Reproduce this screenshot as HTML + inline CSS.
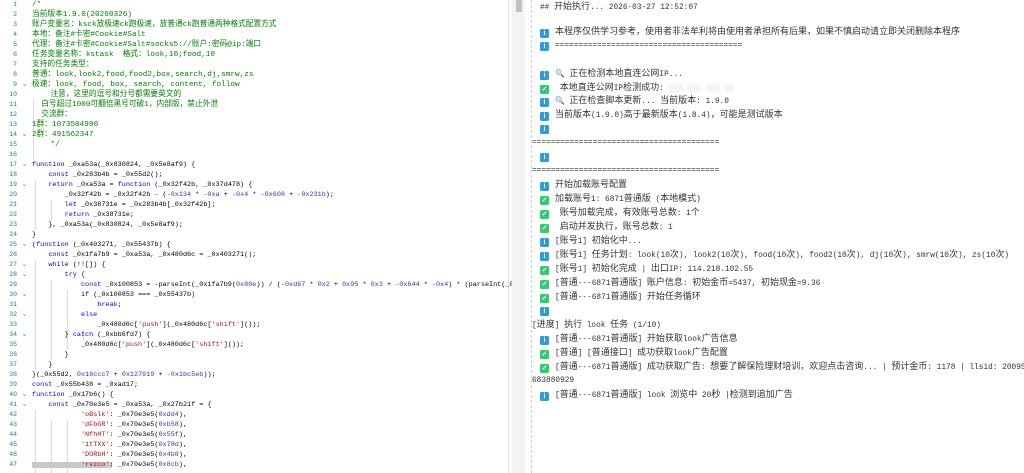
<!DOCTYPE html>
<html><head><meta charset="utf-8"><style>
body{margin:0;width:1024px;height:473px;overflow:hidden;background:#fff;font-family:"Liberation Mono","Noto Sans CJK SC",monospace;}
#left{position:absolute;left:0;top:0;width:512px;height:473px;overflow:hidden;font-size:6.8px;}
.ln{position:absolute;left:0;height:10px;line-height:10px;white-space:pre;width:600px}
.n{display:inline-block;width:17px;text-align:right;color:#237893;font-size:6.5px}
.f{display:inline-block;width:15px;color:#888;text-align:center}
.c{color:#008000;font-size:7.7px}.k{color:#0000ff}.h{color:#3535b8}.s{color:#a31515}
.g{position:absolute;width:1px;background:#d8d8d8}
#right{position:absolute;left:531px;top:0;width:493px;height:473px;font-size:7.8px;color:#333;border-left:1px dashed #ccc;}
.r{position:absolute;left:8px;height:14px;line-height:14px;white-space:pre}
.z{font-size:9px}
.i,.v{display:inline-block;width:9px;height:9px;border-radius:1.5px;vertical-align:-1px;margin-right:6px;color:#fff;font:bold 7px "Liberation Sans";text-align:center;line-height:9px}
.i{background:#2d9cdb}.v{background:#2ecc71}
</style></head><body>
<div id="left">
<div class="g" style="left:33px;top:100px;height:60px"></div>
<div class="g" style="left:35px;top:180px;height:50px"></div>
<div class="g" style="left:51px;top:200px;height:20px"></div>
<div class="g" style="left:35px;top:260px;height:110px"></div>
<div class="g" style="left:51px;top:280px;height:80px"></div>
<div class="g" style="left:67px;top:290px;height:60px"></div>
<div class="g" style="left:83px;top:330px;height:10px"></div>
<div class="g" style="left:35px;top:410px;height:63px"></div>
<div class="g" style="left:51px;top:420px;height:53px"></div>
<div class="g" style="left:67px;top:420px;height:53px"></div>
<div style="position:absolute;left:32px;top:462px;width:80px;height:6px;background:#c8c8c8"></div>
<div style="position:absolute;left:508px;top:0;width:1px;height:473px;background:#e4e4e4"></div>
<div style="position:absolute;left:0;top:0">
<div class="ln" style="top:0"><span class="n">1</span><span class="f"></span><span class="c">/*</span></div>
<div class="ln" style="top:10px"><span class="n">2</span><span class="f"></span><span class="c">当前版本1.9.0(20260326)</span></div>
<div class="ln" style="top:20px"><span class="n">3</span><span class="f"></span><span class="c">账户变量名：ksck放极速ck跑极速，放普通ck跑普通两种格式配置方式</span></div>
<div class="ln" style="top:30px"><span class="n">4</span><span class="f"></span><span class="c">本地：备注#卡密#Cookie#Salt</span></div>
<div class="ln" style="top:40px"><span class="n">5</span><span class="f"></span><span class="c">代理：备注#卡密#Cookie#Salt#socks5://账户:密码@ip:端口</span></div>
<div class="ln" style="top:50px"><span class="n">6</span><span class="f"></span><span class="c">任务变量名称：kstask  格式：look,10;food,10</span></div>
<div class="ln" style="top:60px"><span class="n">7</span><span class="f"></span><span class="c">支持的任务类型：</span></div>
<div class="ln" style="top:70px"><span class="n">8</span><span class="f"></span><span class="c">普通：look,look2,food,food2,box,search,dj,smrw,zs</span></div>
<div class="ln" style="top:80px"><span class="n">9</span><span class="f">⌄</span><span class="c">极速：look, food, box, search, content, follow</span></div>
<div class="ln" style="top:90px"><span class="n">10</span><span class="f"></span><span class="c">    注意，这里的逗号和分号都需要英文的</span></div>
<div class="ln" style="top:100px"><span class="n">11</span><span class="f"></span><span class="c">  白号超过1000可翻倍黑号可破1，内部版，禁止外泄</span></div>
<div class="ln" style="top:110px"><span class="n">12</span><span class="f"></span><span class="c">  交流群：</span></div>
<div class="ln" style="top:120px"><span class="n">13</span><span class="f"></span><span class="c">1群：1073504990</span></div>
<div class="ln" style="top:130px"><span class="n">14</span><span class="f">⌄</span><span class="c">2群：491562347</span></div>
<div class="ln" style="top:140px"><span class="n">15</span><span class="f"></span><span class="c">    */</span></div>
<div class="ln" style="top:150px"><span class="n">16</span><span class="f"></span></div>
<div class="ln" style="top:160px"><span class="n">17</span><span class="f">⌄</span><span class="k">function</span> _0xa53a(_0x830824, _0x5e8af9) {</div>
<div class="ln" style="top:170px"><span class="n">18</span><span class="f"></span>    <span class="k">const</span> _0x283b4b = _0x55d2();</div>
<div class="ln" style="top:180px"><span class="n">19</span><span class="f">⌄</span>    <span class="k">return</span> _0xa53a = <span class="k">function</span> (_0x32f42b, _0x37d478) {</div>
<div class="ln" style="top:190px"><span class="n">20</span><span class="f"></span>        _0x32f42b = _0x32f42b - (<span class="h">-0x134</span> * <span class="h">-0xa</span> + <span class="h">-0x4</span> * <span class="h">-0x608</span> + <span class="h">-0x231b</span>);</div>
<div class="ln" style="top:200px"><span class="n">21</span><span class="f"></span>        <span class="k">let</span> _0x38731e = _0x283b4b[_0x32f42b];</div>
<div class="ln" style="top:210px"><span class="n">22</span><span class="f"></span>        <span class="k">return</span> _0x38731e;</div>
<div class="ln" style="top:220px"><span class="n">23</span><span class="f"></span>    }, _0xa53a(_0x830824, _0x5e8af9);</div>
<div class="ln" style="top:230px"><span class="n">24</span><span class="f"></span>}</div>
<div class="ln" style="top:240px"><span class="n">25</span><span class="f">⌄</span>(<span class="k">function</span> (_0x403271, _0x55437b) {</div>
<div class="ln" style="top:250px"><span class="n">26</span><span class="f"></span>    <span class="k">const</span> _0x1fa7b9 = _0xa53a, _0x480d6c = _0x403271();</div>
<div class="ln" style="top:260px"><span class="n">27</span><span class="f">⌄</span>    <span class="k">while</span> (!![]) {</div>
<div class="ln" style="top:270px"><span class="n">28</span><span class="f">⌄</span>        <span class="k">try</span> {</div>
<div class="ln" style="top:280px"><span class="n">29</span><span class="f"></span>            <span class="k">const</span> _0x100853 = -parseInt(_0x1fa7b9(<span class="h">0x80e</span>)) / (<span class="h">-0xd67</span> * <span class="h">0x2</span> + <span class="h">0x95</span> * <span class="h">0x3</span> + <span class="h">-0x644</span> * <span class="h">-0x4</span>) * (parseInt(_0x</div>
<div class="ln" style="top:290px"><span class="n">30</span><span class="f">⌄</span>            <span class="k">if</span> (_0x100853 === _0x55437b)</div>
<div class="ln" style="top:300px"><span class="n">31</span><span class="f"></span>                <span class="k">break</span>;</div>
<div class="ln" style="top:310px"><span class="n">32</span><span class="f">⌄</span>            <span class="k">else</span></div>
<div class="ln" style="top:320px"><span class="n">33</span><span class="f"></span>                _0x480d6c[<span class="s">'push'</span>](_0x480d6c[<span class="s">'shift'</span>]());</div>
<div class="ln" style="top:330px"><span class="n">34</span><span class="f">⌄</span>        } <span class="k">catch</span> (_0xbb6fd7) {</div>
<div class="ln" style="top:340px"><span class="n">35</span><span class="f"></span>            _0x480d6c[<span class="s">'push'</span>](_0x480d6c[<span class="s">'shift'</span>]());</div>
<div class="ln" style="top:350px"><span class="n">36</span><span class="f"></span>        }</div>
<div class="ln" style="top:360px"><span class="n">37</span><span class="f"></span>    }</div>
<div class="ln" style="top:370px"><span class="n">38</span><span class="f"></span>}(_0x55d2, <span class="h">0x16ccc7</span> + <span class="h">0x127919</span> + <span class="h">-0x1bc5eb</span>));</div>
<div class="ln" style="top:380px"><span class="n">39</span><span class="f"></span><span class="k">const</span> _0x55b438 = _0xad17;</div>
<div class="ln" style="top:390px"><span class="n">40</span><span class="f">⌄</span><span class="k">function</span> _0x17b6() {</div>
<div class="ln" style="top:400px"><span class="n">41</span><span class="f">⌄</span>    <span class="k">const</span> _0x70e3e5 = _0xa53a, _0x27b21f = {</div>
<div class="ln" style="top:410px"><span class="n">42</span><span class="f"></span>            <span class="s">'oBslk'</span>: _0x70e3e5(<span class="h">0xdd4</span>),</div>
<div class="ln" style="top:420px"><span class="n">43</span><span class="f"></span>            <span class="s">'dFbGR'</span>: _0x70e3e5(<span class="h">0xb58</span>),</div>
<div class="ln" style="top:430px"><span class="n">44</span><span class="f"></span>            <span class="s">'NfhHT'</span>: _0x70e3e5(<span class="h">0x55f</span>),</div>
<div class="ln" style="top:440px"><span class="n">45</span><span class="f"></span>            <span class="s">'1tTXX'</span>: _0x70e3e5(<span class="h">0x78d</span>),</div>
<div class="ln" style="top:450px"><span class="n">46</span><span class="f"></span>            <span class="s">'DORbH'</span>: _0x70e3e5(<span class="h">0x4b8</span>),</div>
<div class="ln" style="top:460px"><span class="n">47</span><span class="f"></span>            <span class="s">'rvzco'</span>: _0x70e3e5(<span class="h">0x8cb</span>),</div>
</div>
</div>
<div style="position:absolute;left:512px;top:0;width:13px;height:473px;background:#f3f3f3"></div>
<div style="position:absolute;left:516px;top:0;width:6px;height:12px;background:#c1c1c1"></div>
<div id="right">
<div class="r" style="top:0;left:8px">## <span class="z">开始执行</span>... 2026-03-27 12:52:07</div>
<div class="r" style="top:25px"><span class="i">i</span><span class="z">本程序仅供学习参考，使用者非法牟利将由使用者承担所有后果，如果不慎启动请立即关闭删除本程序</span></div>
<div class="r" style="top:39px"><span class="i">i</span>========================================</div>
<div class="r" style="top:67px"><span class="i">i</span>🔍 <span class="z">正在检测本地直连公网</span>IP...</div>
<div class="r" style="top:81px"><span class="v">✓</span> <span class="z">本地直连公网</span>IP<span class="z">检测成功</span>: <span style="color:#ddd">▒▒▒.▒▒▒.▒▒▒.▒▒</span></div>
<div class="r" style="top:94px"><span class="i">i</span>🔍 <span class="z">正在检查脚本更新</span>... <span class="z">当前版本</span>: 1.9.0</div>
<div class="r" style="top:108px"><span class="i">i</span><span class="z">当前版本</span>(1.9.0)<span class="z">高于最新版本</span>(1.8.4)<span class="z">，可能是测试版本</span></div>
<div class="r" style="top:122px"><span class="i">i</span></div>
<div class="r" style="top:136px;left:0">========================================</div>
<div class="r" style="top:150px"><span class="i">i</span></div>
<div class="r" style="top:164px;left:0">========================================</div>
<div class="r" style="top:178px"><span class="i">i</span><span class="z">开始加载账号配置</span></div>
<div class="r" style="top:192px"><span class="v">✓</span><span class="z">加载账号</span>1: 6871<span class="z">普通版</span> (<span class="z">本地模式</span>)</div>
<div class="r" style="top:206px"><span class="v">✓</span> <span class="z">账号加载完成，有效账号总数</span>: 1<span class="z">个</span></div>
<div class="r" style="top:220px"><span class="v">✓</span> <span class="z">启动并发执行，账号总数</span>: 1</div>
<div class="r" style="top:234px"><span class="i">i</span>[<span class="z">账号</span>1] <span class="z">初始化中</span>...</div>
<div class="r" style="top:248px"><span class="i">i</span>[<span class="z">账号</span>1] <span class="z">任务计划</span>: look(10<span class="z">次</span>), look2(10<span class="z">次</span>), food(10<span class="z">次</span>), food2(10<span class="z">次</span>), dj(10<span class="z">次</span>), smrw(10<span class="z">次</span>), zs(10<span class="z">次</span>)</div>
<div class="r" style="top:262px"><span class="v">✓</span>[<span class="z">账号</span>1] <span class="z">初始化完成</span> | <span class="z">出口</span>IP: 114.218.102.55</div>
<div class="r" style="top:276px"><span class="v">✓</span>[<span class="z">普通</span>---6871<span class="z">普通版</span>] <span class="z">账户信息</span>: <span class="z">初始金币</span>=5437, <span class="z">初始现金</span>=9.36</div>
<div class="r" style="top:290px"><span class="v">✓</span>[<span class="z">普通</span>---6871<span class="z">普通版</span>] <span class="z">开始任务循环</span></div>
<div class="r" style="top:304px"><span class="i">i</span></div>
<div class="r" style="top:318px;left:0">[<span class="z">进度</span>] <span class="z">执行</span> look <span class="z">任务</span> (1/10)</div>
<div class="r" style="top:332px"><span class="i">i</span>[<span class="z">普通</span>---6871<span class="z">普通版</span>] <span class="z">开始获取</span>look<span class="z">广告信息</span></div>
<div class="r" style="top:346px"><span class="v">✓</span>[<span class="z">普通</span>] [<span class="z">普通接口</span>] <span class="z">成功获取</span>look<span class="z">广告配置</span></div>
<div class="r" style="top:360px"><span class="v">✓</span>[<span class="z">普通</span>---6871<span class="z">普通版</span>] <span class="z">成功获取广告</span>: <span class="z">想要了解保险理财培训，欢迎点击咨询</span>... | <span class="z">预计金币</span>: 1178 | llsid: 20095</div>
<div class="r" style="top:374px;left:0">683880929</div>
<div class="r" style="top:388px"><span class="i">i</span>[<span class="z">普通</span>---6871<span class="z">普通版</span>] look <span class="z">浏览中</span> 20<span class="z">秒</span> |<span class="z">检测到追加广告</span></div>
</div>
</body></html>
